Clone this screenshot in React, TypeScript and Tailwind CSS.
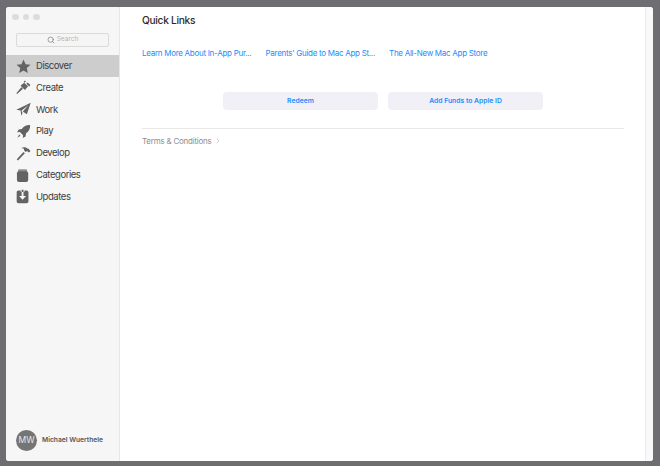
import { Search, ChevronRight } from "lucide-react";
import type { ReactNode } from "react";

const fontStack = "[font-family:Inter,'Liberation_Sans',sans-serif]";

const icons: Record<string, ReactNode> = {
  Discover: (
    <path d="M8 .6l2.200 4.900 5.300.6-4 3.600 1.100 5.300L8 12.300l-4.600 2.700 1.100-5.300-4-3.600 5.300-.6z" />
  ),
  Create: (
    <>
      <path d="M1.200 15l-.8-.9 5.200-6.300 1.800 1.600z" />
      <path d="M4.800 6.200l3.800-3.400 4.300 3.900-3.400 3.900z" />
      <path d="M8.200 1.800l1.400-1.200 1 .9-1.400 1.300zM11 4l1.400-1.300 3 2.600-1.300 1.600z" />
    </>
  ),
  Work: <path d="M15.700.8L11.600 13 7.600 10.400 5.600 14.600 4.900 9 .3 8.200zM6 9l.5 3 1-2.200 5.600-6.300z" fillRule="evenodd" />,
  Play: (
    <>
      <path d="M15 1c.3 3.600-1.100 6.700-4.300 8.900l-.5 3.300-3 1.800.4-3-3.500-3.500-3 .4 1.800-3 3.300-.5C8.300 2.100 11.400.700 15 1z" />
      <path d="M3.400 11.200l1.400 1.400-3.300 2z" />
    </>
  ),
  Develop: (
    <>
      <path d="M.8 14.200L8 6.400l1.500 1.300-7.400 7.700z" />
      <path d="M5 2.800C7.600.8 10.600 1 12.400 3l.7-.3 2.300 2.500-1.600 1.600-2-1.400-1.300.9-2.100-1.900.2-1.200C7.800 2.200 6.400 2.200 5 2.800z" />
    </>
  ),
  Categories: (
    <>
      <rect x="2.200" y="1.400" width="9.600" height="3" rx="1.200" opacity="0.7" />
      <rect x="1" y="3.400" width="12" height="11.600" rx="2.200" />
    </>
  ),
  Updates: (
    <path
      transform="translate(-1 0)"
      fillRule="evenodd"
      d="M3.800 1.600H6v1.500H4.800v0H7V.8h2v2.300h2.200v0H10V1.600h2.200c1.300 0 2.100.800 2.100 2.100v9.400c0 1.300-.8 2.100-2.100 2.100H3.800c-1.300 0-2.100-.800-2.100-2.100V3.700c0-1.300.8-2.100 2.100-2.100zM7 3.100v4.300H4.300L8 11.400l3.700-4H9V3.100z"
    />
  ),
};

const navItems = ["Discover", "Create", "Work", "Play", "Develop", "Categories", "Updates"];

const links = ["Learn More About In-App Pur...", "Parents' Guide to Mac App St...", "The All-New Mac App Store"];

function NavRow({ label, active }: { label: string; active?: boolean }) {
  return (
    <div className={`flex h-[21.800px] items-center pl-[10px] ${active ? "bg-[#cdcdcd]" : ""}`}>
      <svg viewBox="0 0 16 16" className="h-[15px] w-[15px] shrink-0 fill-[#636363]">
        {icons[label]}
      </svg>
      <span className="ml-[5px] text-[9.500px] tracking-[-0.45px] text-[#404040]">{label}</span>
    </div>
  );
}

export default function App() {
  return (
    <div className={`h-[466px] w-[660px] bg-[#6e6e72] pt-[7px] pr-[7px] pb-[5px] pl-[6px] ${fontStack}`}>
      <div className="flex h-full overflow-hidden rounded-[3px] bg-white">
        {/* Sidebar */}
        <aside className="flex w-[114px] shrink-0 flex-col border-r border-[#e6e6e6] bg-[#f6f6f6]">
          <div className="flex gap-[4px] pt-[6.500px] pl-[6px]">
            <span className="h-[6.500px] w-[6.500px] rounded-full bg-[#dcdcdc]" />
            <span className="h-[6.500px] w-[6.500px] rounded-full bg-[#dcdcdc]" />
            <span className="h-[6.500px] w-[6.500px] rounded-full bg-[#dcdcdc]" />
          </div>
          <div className="mx-[10px] mt-[12.500px] flex h-[14px] items-center justify-center gap-[2px] rounded-[2px] border border-[#dadada] bg-[#f5f5f5]">
            <Search size={8} strokeWidth={2} className="text-[#777777]" />
            <span className="text-[6.500px] text-[#b5b5b5]">Search</span>
          </div>
          <nav className="mt-[8.800px]">
            {navItems.map((item) => (
              <NavRow key={item} label={item} active={item === "Discover"} />
            ))}
          </nav>
          <div className="mt-auto mb-[10px] flex items-center pl-[10px]">
            <div className="flex h-[21px] w-[21px] items-center justify-center rounded-full bg-[#757575] text-[8.500px] text-[#e8e8e8]">
              MW
            </div>
            <span className="ml-[5px] text-[6.700px] font-semibold text-[#555555]">Michael Wuerthele</span>
          </div>
        </aside>

        {/* Main content */}
        <main className="flex-1 pt-[7px] pl-[22px]">
          <div className="w-[482px]">
            <h1 className="text-[10.200px] leading-[13px] font-medium tracking-[-0.3px] text-[#2a2a2a]">Quick Links</h1>
            <div className="mt-[20px] flex h-[12px] items-center text-[8px] tracking-[-0.28px] text-[#1a8cff]">
              <a className="w-[123.500px] whitespace-nowrap">{links[0]}</a>
              <a className="w-[123.500px] whitespace-nowrap">{links[1]}</a>
              <a className="whitespace-nowrap">{links[2]}</a>
            </div>
            <div className="mt-[33px] flex justify-center gap-[10px]">
              <button className="h-[18px] w-[155px] rounded-[4px] bg-[#f0f0f6] text-[6.800px] font-semibold text-[#1a8cff]">
                Redeem
              </button>
              <button className="h-[18px] w-[155px] rounded-[4px] bg-[#f0f0f6] text-[6.800px] font-semibold text-[#1a8cff]">
                Add Funds to Apple ID
              </button>
            </div>
            <div className="mt-[18px] border-t border-[#e8e8e8]" />
            <div className="mt-[6px] flex items-center gap-[2px] text-[8px] tracking-[-0.23px] text-[#8e8e8e]">
              <span>Terms &amp; Conditions</span>
              <ChevronRight size={8} className="text-[#b8b8b8]" />
            </div>
          </div>
        </main>

        {/* Scroll track */}
        <div className="w-[8px] shrink-0 border-l border-[#ececec] bg-[#f9f9f9]" />
      </div>
    </div>
  );
}
